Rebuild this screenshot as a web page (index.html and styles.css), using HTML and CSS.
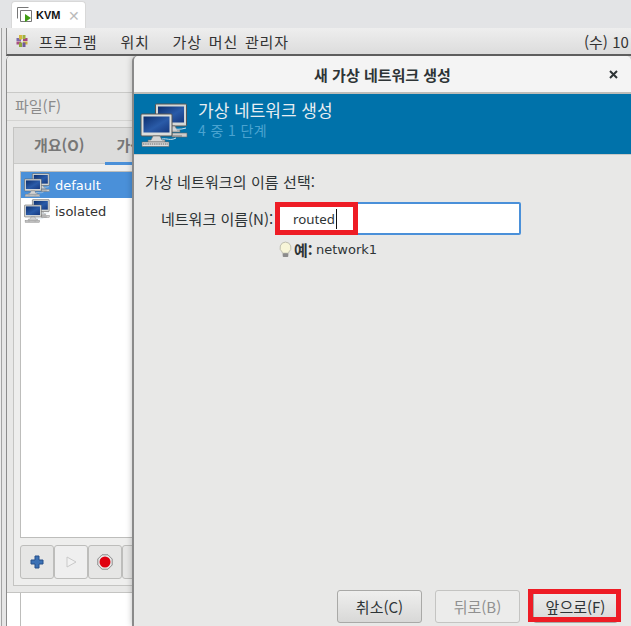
FILE: index.html
```html
<!DOCTYPE html>
<html lang="ko">
<head>
<meta charset="utf-8">
<title>KVM</title>
<link rel="stylesheet" href="styles.css">
</head>
<body>
<svg class="defs" width="0" height="0" aria-hidden="true">
  <defs>
    <linearGradient id="scr" x1="0" y1="0" x2="1" y2="1"><stop offset="0" stop-color="#0d2f6e"/><stop offset="0.55" stop-color="#2a5ba8"/><stop offset="1" stop-color="#16397f"/></linearGradient>
    <symbol id="pc" viewBox="0 0 48 44">
      <rect x="15.500" y="1" width="31" height="22" rx="1" fill="#d5d8d6" stroke="#555"/>
      <rect x="18" y="3.500" width="26" height="16" fill="url(#scr)"/>
      <path d="M27 23h8l2 4h3v2H23v-2h2z" fill="#ccc" stroke="#666" stroke-width=".6"/>
      <rect x="32" y="30" width="15" height="4" fill="#ccc" stroke="#666" stroke-width=".6"/>
      <path d="M32 33h10" stroke="#777" stroke-width="1"/>
      <path d="M30 26c6 0 10 1 16-1" stroke="#cfe0ea" stroke-width="1" fill="none"/>
      <rect x="1" y="11" width="31" height="22" rx="1" fill="#dcdedc" stroke="#555"/>
      <rect x="3.500" y="13.500" width="26" height="16" fill="url(#scr)"/>
      <path d="M13 33h7l2 4h3v2H8v-2h3z" fill="#d5d5d5" stroke="#666" stroke-width=".6"/>
      <rect x="2" y="39" width="27" height="4.500" fill="#ddd" stroke="#666" stroke-width=".6"/>
      <path d="M3 41h25" stroke="#666" stroke-width="1" stroke-dasharray="1.500 .7"/>
      <path d="M22 36c5-1 8 2 14-1" stroke="#cfe0ea" stroke-width="1" fill="none"/>
    </symbol>
  </defs>
</svg>

<header class="tabstrip">
  <div class="tab">
    <svg class="tab-icon" width="16" height="16" viewBox="0 0 16 16">
      <path d="M.5 11.500V.5h11" fill="none" stroke="#777"/>
      <path d="M3.500 14.500v-11h11v11z" fill="#fff" stroke="#777"/>
      <path d="M8 7l6 4-6 4z" fill="#3f9c12"/>
    </svg>
    <span class="tab-label">KVM</span>
    <span class="tab-close">✕</span>
  </div>
</header>

<nav class="topbar">
  <svg class="distro" width="14" height="14" viewBox="0 0 14 14">
    <rect x="1.500" y="4" width="4.500" height="3" fill="#7d6aa8"/><rect x="8" y="4" width="4.500" height="3" fill="#a8467f"/>
    <rect x="4" y="1" width="3" height="4.500" fill="#d3b83f"/><rect x="7.500" y="1" width="3" height="4" fill="#9fb13f"/>
    <rect x="1.500" y="7.500" width="4.500" height="3" fill="#a94f80"/><rect x="8" y="7.500" width="4.500" height="3" fill="#cdb23f"/>
    <rect x="4" y="8.500" width="3" height="4.500" fill="#8fa63a"/><rect x="7.500" y="8.500" width="3" height="4.500" fill="#6d5a9c"/>
  </svg>
  <span class="menu first">프로그램</span>
  <span class="menu">위치</span>
  <span class="menu">가상 머신 관리자</span>
  <span class="clock">(수) 10</span>
</nav>

<main class="desktop">
  <section class="win-back">
    <div class="back-window">
      <div class="back-title"></div>
      <div class="back-menu">파일(F)</div>
      <div class="notebook">
        <div class="tabs">
          <span class="nb-tab">개요(O)</span>
          <span class="nb-tab nb-active">가상 네트워크</span>
        </div>
        <div class="nb-body">
          <ul class="netlist">
            <li class="net net-sel"><svg class="net-icon" width="26" height="24"><use href="#pc"/></svg>default</li>
            <li class="net"><svg class="net-icon" width="26" height="24"><use href="#pc"/></svg>isolated</li>
          </ul>
          <div class="toolbar">
            <button class="tool">
              <svg width="16" height="16" viewBox="0 0 16 16"><path d="M6 2h4v4h4v4h-4v4H6v-4H2V6h4z" fill="#3b71b5" stroke="#27508a"/></svg>
            </button>
            <button class="tool tool-off">
              <svg width="12" height="12" viewBox="0 0 12 12"><path d="M2 1l9 5-9 5z" fill="#f2f2f2" stroke="#c9c9c9"/></svg>
            </button>
            <button class="tool">
              <svg width="16" height="16" viewBox="0 0 16 16"><path d="M5 .8h6L15.200 5v6L11 15.200H5L.8 11V5z" fill="#e9e9e9" stroke="#8b8b8b"/><circle cx="8" cy="8" r="5.500" fill="#df0010"/></svg>
            </button>
            <button class="tool">
              <svg width="16" height="16" viewBox="0 0 16 16"><circle cx="8" cy="8" r="6.500" fill="#c8565c"/></svg>
            </button>
          </div>
        </div>
      </div>
    </div>
    <div class="back-sheet"></div>
  </section>

  <section class="dialog">
    <div class="dlg-title">
      <span class="dlg-title-text">새 가상 네트워크 생성</span>
      <svg class="dlg-close" width="9" height="9" viewBox="0 0 9 9"><path d="M1 1l7 7M8 1l-7 7" stroke="#2e3436" stroke-width="2"/></svg>
    </div>
    <div class="banner">
      <svg class="banner-icon" width="48" height="44"><use href="#pc"/></svg>
      <div class="banner-text">
        <div class="banner-main">가상 네트워크 생성</div>
        <div class="banner-sub">4 중 1 단계</div>
      </div>
    </div>
    <div class="dlg-body">
      <p class="prompt">가상 네트워크의 이름 선택:</p>
      <div class="field-row">
        <label class="field-label">네트워크 이름(N):</label>
        <div class="field"><span class="field-value">routed</span><span class="caret"></span></div>
      </div>
      <div class="hint">
        <svg width="13" height="17" viewBox="0 0 14 18"><path d="M7 1a6 6 0 0 1 3.500 10.800V13h-7v-1.200A6 6 0 0 1 7 1z" fill="#f7f5d8" stroke="#b9b9ac"/><rect x="4" y="13" width="6" height="4" rx="1" fill="#8b8b8b"/></svg>
        <b class="hint-key">예:</b><span class="hint-val">network1</span>
      </div>
      <div class="spacer"></div>
      <div class="actions">
        <button class="btn">취소(C)</button>
        <button class="btn btn-off">뒤로(B)</button>
        <button class="btn">앞으로(F)</button>
      </div>
    </div>
  </section>

  <div class="mark mark-field"></div>
  <div class="mark mark-next"></div>
</main>
</body>
</html>
```

FILE: styles.css
```css
* { box-sizing: border-box; }
html, body { margin: 0; padding: 0; }
body {
  width: 631px;
  height: 626px;
  overflow: hidden;
  background: linear-gradient(to right, #ececec 1px, #a3a3a3 1px, #a3a3a3 2px, #e6e6e6 2px);
  color: #2e3436;
  font-family: "Noto Sans CJK KR", "Noto Sans", sans-serif;
  font-size: 15px;
  position: relative;
}
.defs { position: absolute; }

.tabstrip {
  height: 28px;
  background: #e3e4e6;
  padding: 1px 0 0 11px;
}
.tab {
  width: 75px;
  height: 27px;
  background: #fff;
  border-radius: 4px 4px 0 0;
  border: 1px solid #d8d8d8;
  border-bottom: 0;
  display: flex;
  align-items: center;
  padding-left: 5px;
}
.tab-icon { flex: none; }
.tab-label {
  font: 700 11px "Liberation Sans", sans-serif;
  color: #111;
  margin-left: 3px;
  width: 32px;
}
.tab-close { color: #bbb; font-size: 14px; line-height: 1; }

.topbar {
  height: 28px;
  margin-left: 6px;
  border-left: 1px solid #888;
  border-bottom: 2px solid #5e5e5e;
  background: linear-gradient(#eeeeee, #dcdcdc);
  display: flex;
  align-items: center;
  padding-left: 8px;
  color: #333;
}
.distro { flex: none; }
.menu { margin-left: 23px; white-space: nowrap; letter-spacing: .8px; word-spacing: 2px; }
.menu.first { margin-left: 10px; }
.clock { margin-left: auto; white-space: nowrap; width: 47px; overflow: hidden; }

.desktop {
  position: absolute;
  left: 0; top: 56px;
  width: 631px; height: 570px;
  overflow: hidden;
}
.win-back {
  position: absolute;
  left: 6px; top: 0;
  width: 127px; height: 570px;
  overflow: hidden;
  border-left: 1px solid #8c8c8c;
  background: #fff;
  border-radius: 5px 0 0 0;
}
.back-window {
  height: 537px;
  width: 140px;
  background: #e8e8e7;
  border-bottom: 1px solid #c4c4c2;
}
.back-title { height: 37px; border-bottom: 1px solid #c9c9c7; background: #ececeb; }
.back-menu { height: 28px; border-bottom: 1px solid #d4d4d2; padding-top: 2px; padding-left: 8px; color: #8b8b8b; }
.notebook {
  margin: 6px 0 0 6px;
  height: 459px;
  border: 1px solid #c4c4c2;
  background: #ebebea;
}
.tabs {
  height: 36px;
  background: #dcdcdb;
  display: flex;
  align-items: center;
  padding: 0 0 2px 20px;
  border-bottom: 1px solid #c9c9c7;
  white-space: nowrap;
  font-weight: 700;
  color: #777;
}
.nb-tab { margin-right: 32px; }
.nb-active { position: relative; }
.nb-active::after {
  content: "";
  position: absolute;
  left: -12px; right: 0; top: 28px;
  height: 3px;
  background: #4a90d9;
}
.nb-body { padding: 7px 6px 0 6px; background: #eeeeed; height: 421px; }
.netlist {
  list-style: none;
  margin: 0; padding: 0;
  width: 128px;
  height: 367px;
  background: #fff;
  border: 1px solid #bdbdbb;
}
.net {
  height: 26px;
  display: flex;
  align-items: center;
  padding-left: 3px;
  font: 13px "DejaVu Sans", sans-serif;
  color: #333;
}
.net-icon { margin-right: 5px; flex: none; }
.net-sel { background: #4a90d9; color: #fff; }
.toolbar { display: flex; margin-top: 7px; }
.tool {
  flex: none;
  width: 34px; height: 34px;
  border: 1px solid #bdbdbb;
  border-radius: 3px;
  background: #e6e6e5;
  display: flex; align-items: center; justify-content: center;
  padding: 0;
}
.tool-off { background: #efefef; }
.back-sheet {
  margin-left: 13px;
  height: 33px;
  border-left: 1px solid #bdbdbb;
  background: #fff;
}

.dialog {
  position: absolute;
  left: 132px; top: 0;
  width: 499px; height: 570px;
  background: #e8e8e7;
  border-left: 2px solid #8a8a8a;
  border-radius: 5px 5px 0 0;
  display: flex;
  flex-direction: column;
  box-shadow: 0 0 6px rgba(0,0,0,.25);
}
.dlg-title {
  height: 38px;
  background: #f4f4f4;
  border-bottom: 2px solid #bdbdb9;
  border-radius: 5px 5px 0 0;
  display: flex;
  align-items: center;
  justify-content: center;
  position: relative;
  flex: none;
}
.dlg-title-text { font-weight: 700; color: #2e3436; }
.dlg-close {
  position: absolute;
  right: 13px; top: 14px;
}
.banner {
  flex: none;
  height: 61px;
  background: #0072aa;
  display: flex;
  padding: 9px 0 0 6px;
  border-bottom: 1px solid #c8c8c6;
}
.banner-icon { flex: none; }
.banner-text { margin-left: 10px; }
.banner-main { font-size: 17px; line-height: 20px; color: #e9eef2; margin-top: -3px; }
.banner-sub { font-size: 14px; line-height: 16px; color: #4aa3d0; letter-spacing: .4px; margin-top: 2px; }

.dlg-body {
  flex: 1;
  display: flex;
  flex-direction: column;
  padding: 0 0 3px 11px;
}
.prompt { margin: 17px 0 0 0; line-height: 19px; letter-spacing: .1px; }
.field-row { display: flex; align-items: center; margin-top: 11px; }
.field-label { width: 114px; margin-left: 16px; white-space: nowrap; flex: none; }
.field {
  width: 246px;
  height: 33px;
  background: #fff;
  border: 2px solid #4a90d9;
  border-radius: 2px;
  display: flex;
  align-items: center;
  padding-left: 16px;
  font: 13.300px "Noto Sans", sans-serif;
}
.caret { width: 1px; height: 20px; background: #111; margin-left: 1px; }
.hint { display: flex; align-items: center; margin: 5px 0 0 134px; height: 19px; }
.hint-key { margin-left: 2px; font-weight: 700; width: 22px; }
.hint-val { font: 13px "DejaVu Sans", sans-serif; }
.spacer { flex: 1; }
.actions { display: flex; justify-content: flex-end; gap: 13px; padding-right: 13px; }
.btn {
  width: 85px;
  height: 33px;
  border: 1px solid #a9a9a7;
  border-radius: 3px;
  background: linear-gradient(#efefee, #d8d8d7);
  font: 15px "Noto Sans CJK KR", sans-serif;
  color: #2e3436;
  padding: 0;
}
.btn-off { background: #ececeb; border-color: #c4c4c2; color: #909090; }

.mark { position: absolute; border: 5px solid #ee1c25; }
.mark-field { left: 275px; top: 146px; width: 83px; height: 33px; }
.mark-next { left: 528px; top: 533px; width: 93px; height: 33px; }
```
